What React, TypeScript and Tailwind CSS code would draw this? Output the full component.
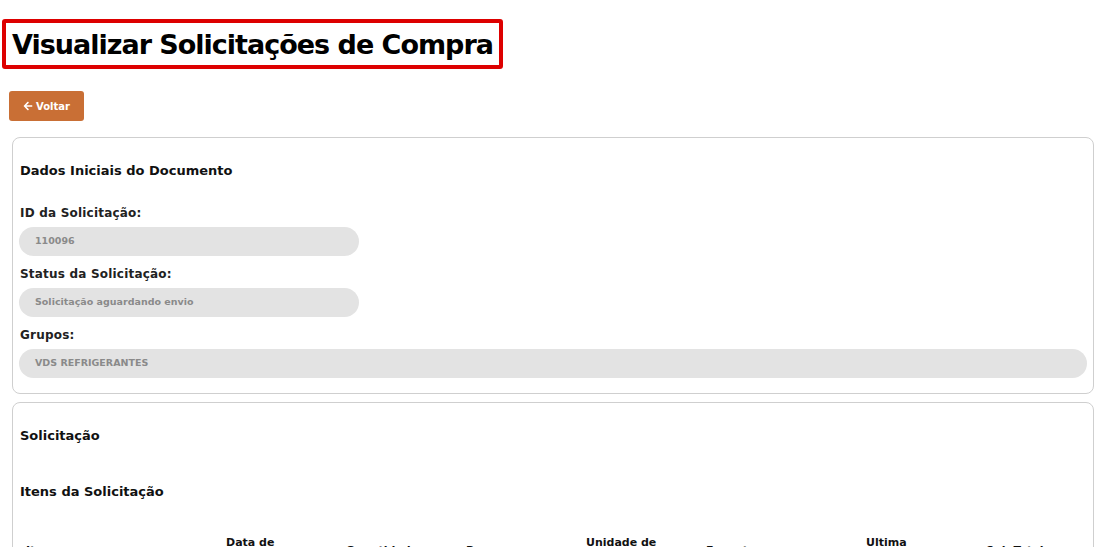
import React from "react";
import { FaArrowLeft } from "react-icons/fa";

const font = { fontFamily: '"DejaVu Sans", "Noto Sans", sans-serif' };

function Field({ label, value, full }: { label: string; value: string; full?: boolean }) {
  return (
    <div className="flex flex-col">
      <div className="ml-px text-[12px] font-semibold leading-[17px] text-[#222] tracking-[0.2px]">{label}</div>
      <div
        className={`mt-[5px] flex h-[29px] items-center rounded-full bg-[#e3e3e3] pl-4 text-[9.5px] font-bold text-[#8a8a8a] ${full ? "w-full" : "w-[340px]"}`}
      >
        {value}
      </div>
    </div>
  );
}

export default function App() {
  const cols: { label: string[]; w: string }[] = [
    { label: ["Item"], w: "w-[200px]" },
    { label: ["Data de", "Entrega"], w: "w-[120px]" },
    { label: ["Quantidade"], w: "w-[120px]" },
    { label: ["Preço"], w: "w-[120px]" },
    { label: ["Unidade de", "Medida"], w: "w-[120px]" },
    { label: ["Em estoque"], w: "w-[160px]" },
    { label: ["Ultima", "Compra"], w: "w-[120px]" },
    { label: ["Sub Total"], w: "w-[100px]" },
  ];
  return (
    <div className="min-h-[547px] bg-white text-[#111]" style={font}>
      <div className="pl-[2px] pt-[19px]">
        <div className="inline-flex h-[50px] items-center rounded-[3px] border-4 border-[#dd0000] pl-[6px] pr-[6px]">
          <h1 className="text-[27px] font-bold leading-none tracking-[-1px] text-black">Visualizar Solicitações de Compra</h1>
        </div>
      </div>
      <div className="pl-[9px] pt-[22px]">
        <button className="flex h-[30px] w-[75px] items-center justify-center gap-[3px] rounded-[3px] bg-[#c96f35] text-[10px] font-bold text-white">
          <FaArrowLeft className="h-[10px] w-[10px]" />
          Voltar
        </button>
      </div>
      <div className="ml-[12px] mr-[9px] mt-[16px] rounded-[8px] border border-[#cfcfcf] px-[6px] pb-[15px] pt-[23px]">
        <h2 className="ml-px text-[13px] font-semibold leading-[20px]">Dados Iniciais do Documento</h2>
        <div className="mt-[24px] flex flex-col gap-[10px]">
          <Field label="ID da Solicitação:" value="110096" />
          <Field label="Status da Solicitação:" value="Solicitação aguardando envio" />
          <Field label="Grupos:" value="VDS REFRIGERANTES" full />
        </div>
      </div>
      <div className="ml-[12px] mr-[9px] mt-[8px] rounded-[8px] border border-[#cfcfcf] px-[6px] pt-[23px]">
        <h2 className="ml-px text-[13px] font-semibold leading-[20px]">Solicitação</h2>
        <h2 className="ml-px mt-[36px] text-[13px] font-semibold leading-[20px]">Itens da Solicitação</h2>
        <div className="mt-[29px] flex pl-[7px] text-[11px] font-bold leading-[16px]">
          {cols.map((c) => (
            <div key={c.label[0]} className={`flex ${c.w} h-[40px] flex-col justify-center`}>
              {c.label.map((l) => (
                <div key={l}>{l}</div>
              ))}
            </div>
          ))}
        </div>
        <div className="h-[200px]" />
      </div>
    </div>
  );
}
